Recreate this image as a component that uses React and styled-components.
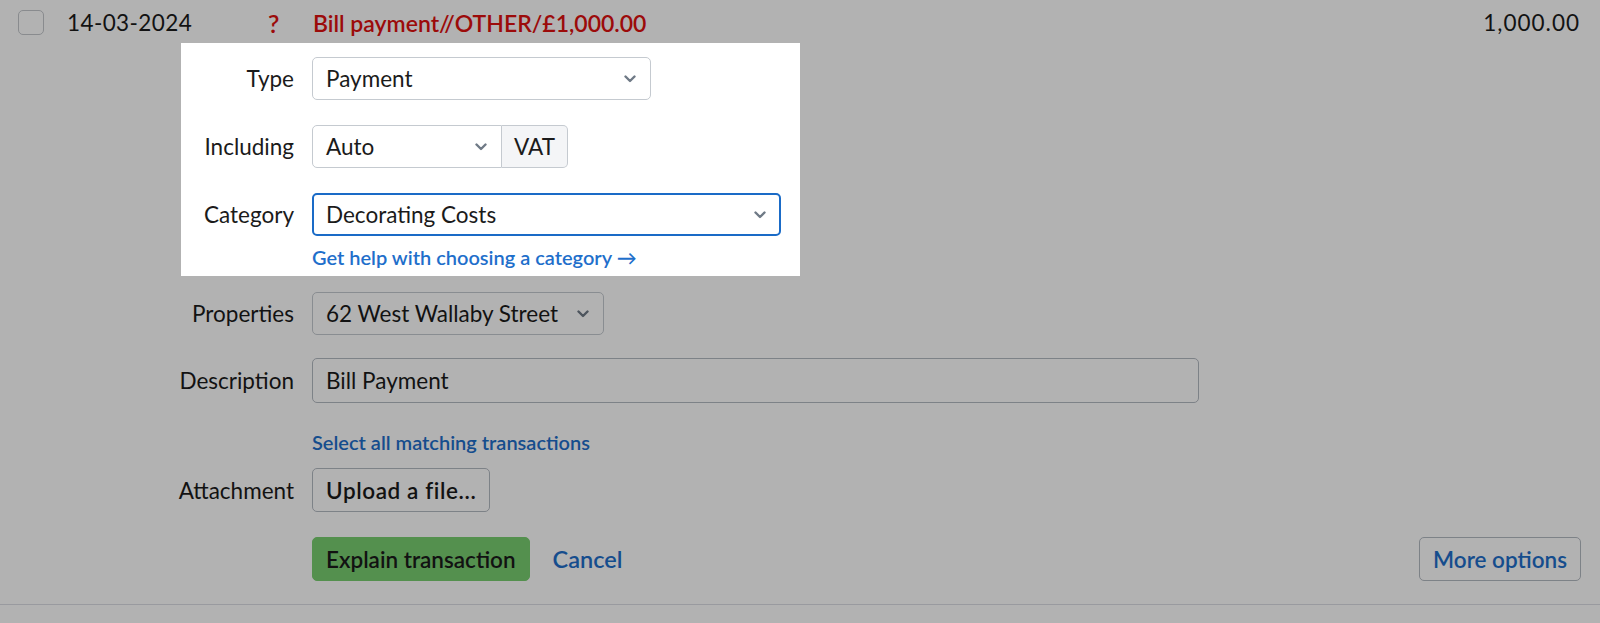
import React from "react";
import styled, { createGlobalStyle } from "styled-components";

const GlobalStyle = createGlobalStyle`
  html, body { margin: 0; padding: 0; background: #ffffff; }
  body {
    font-family: "Lato", "Open Sans", sans-serif;
    font-size: 22.5px;
    color: #1b1b1b;
    overflow: hidden;
  }
`;

const Page = styled.div`
  width: 1600px;
  height: 623px;
  position: relative;
  overflow: hidden;
`;

const TopRow = styled.div`
  display: flex;
  align-items: center;
  height: 45px;
  padding: 0 20px 0 18px;
`;

const Checkbox = styled.span`
  display: inline-block;
  width: 24px;
  height: 23px;
  border: 1px solid #c4c7cc;
  border-radius: 5px;
  background: #fff;
  flex: none;
`;

const DateText = styled.span`
  margin-left: 23px;
  width: 200px;
  flex: none;
  letter-spacing: 0.4px;
`;

const Flag = styled.span`
  width: 45px;
  flex: none;
  color: #e0100f;
  font-size: 25px;
  font-weight: 600;
  padding-left: 1px;
`;

const TxDesc = styled.span`
  color: #e0100f;
  font-weight: 600;
  font-size: 23px;
`;

const Amount = styled.span`
  margin-left: auto;
  letter-spacing: 1px;
`;

const Form = styled.div`
  padding-top: 12px;
`;

const Spotlight = styled.div`
  position: relative;
  &::before {
    content: "";
    position: absolute;
    left: 181px;
    width: 619px;
    top: -14px;
    bottom: -9px;
    box-shadow: 0 0 0 3000px rgba(0, 0, 0, 0.3);
    pointer-events: none;
    z-index: 10;
  }
`;

const FieldRow = styled.div`
  display: flex;
  align-items: center;
  gap: 18px;
  margin-top: ${(p) => p.$mt || 0}px;
  padding-right: 19px;
`;

const Label = styled.div`
  width: 294px;
  flex: none;
  text-align: right;
`;

const SelectBox = styled.div`
  box-sizing: border-box;
  display: flex;
  align-items: center;
  justify-content: space-between;
  width: ${(p) => p.$w}px;
  height: 43px;
  padding: 0 ${(p) => (p.$focus ? 13 : 14)}px 0 ${(p) => (p.$focus ? 12 : 13)}px;
  border: ${(p) => (p.$focus ? "2px solid #1a6bc7" : "1px solid #c5cad0")};
  border-radius: ${(p) => (p.$joined ? "5px 0 0 5px" : "5px")};
  background: #fff;
  flex: none;
  white-space: nowrap;
`;

const Chevron = () => (
  <svg width="12" height="8" viewBox="0 0 12 8" aria-hidden="true">
    <path d="M1.5 1.5 L6 6 L10.5 1.5" fill="none" stroke="#6f7a86" strokeWidth="2.4" strokeLinecap="round" strokeLinejoin="round" />
  </svg>
);

const Group = styled.div`
  display: flex;
  flex: none;
`;

const Addon = styled.div`
  box-sizing: border-box;
  height: 43px;
  width: 66px;
  display: flex;
  align-items: center;
  justify-content: center;
  background: #f4f5f7;
  border: 1px solid #c5cad0;
  border-left: none;
  border-radius: 0 5px 5px 0;
`;

const TextInput = styled.div`
  box-sizing: border-box;
  width: 887px;
  height: 45px;
  display: flex;
  align-items: center;
  padding: 0 13px;
  border: 1px solid #b4bac2;
  border-radius: 5px;
  background: #fff;
`;

const HintLink = styled.div`
  padding-left: 312px;
  margin-top: ${(p) => p.$mt || 0}px;
  line-height: 20px;
  font-size: 20px;
  font-weight: 600;
  color: #1f6fcb;
`;

const Button = styled.div`
  box-sizing: border-box;
  height: 44px;
  padding: 0 13px;
  display: inline-flex;
  align-items: center;
  border-radius: 5px;
  font-weight: 600;
  flex: none;
  white-space: nowrap;
  letter-spacing: ${(p) => p.$track || 0}px;
  border: 1px solid ${(p) => (p.$primary ? "#79cf70" : "#b4bac2")};
  background: ${(p) => (p.$primary ? "#79cf70" : "#fff")};
  color: ${(p) => (p.$link ? "#1f6fcb" : "#1b1b1b")};
`;

const TextLink = styled.span`
  margin-left: 5px;
  color: #1f6fcb;
  font-weight: 600;
  font-size: 23.5px;
`;

const Push = styled.div`
  margin-left: auto;
`;

const Divider = styled.div`
  margin-top: 23px;
  border-top: 1px solid #dcdde4;
`;

export default function App() {
  return (
    <Page>
      <GlobalStyle />
      <TopRow>
        <Checkbox />
        <DateText>14-03-2024</DateText>
        <Flag>?</Flag>
        <TxDesc>Bill payment//OTHER/£1,000.00</TxDesc>
        <Amount>1,000.00</Amount>
      </TopRow>
      <Form>
        <Spotlight>
          <FieldRow>
            <Label>Type</Label>
            <SelectBox $w={339}>
              <span>Payment</span>
              <Chevron />
            </SelectBox>
          </FieldRow>
          <FieldRow $mt={25}>
            <Label>Including</Label>
            <Group>
              <SelectBox $w={190} $joined>
                <span>Auto</span>
                <Chevron />
              </SelectBox>
              <Addon>VAT</Addon>
            </Group>
          </FieldRow>
          <FieldRow $mt={25}>
            <Label>Category</Label>
            <SelectBox $w={469} $focus>
              <span>Decorating Costs</span>
              <Chevron />
            </SelectBox>
          </FieldRow>
          <HintLink $mt={11}>Get help with choosing a category →</HintLink>
        </Spotlight>
        <FieldRow $mt={25}>
          <Label>Properties</Label>
          <SelectBox $w={292}>
            <span>62 West Wallaby Street</span>
            <Chevron />
          </SelectBox>
        </FieldRow>
        <FieldRow $mt={23}>
          <Label>Description</Label>
          <TextInput>Bill Payment</TextInput>
        </FieldRow>
        <HintLink $mt={29}>Select all matching transactions</HintLink>
        <FieldRow $mt={16}>
          <Label>Attachment</Label>
          <Button $track={0.6}>Upload a file...</Button>
        </FieldRow>
        <FieldRow $mt={25}>
          <Label />
          <Button $primary>Explain transaction</Button>
          <TextLink>Cancel</TextLink>
          <Push>
            <Button $link>More options</Button>
          </Push>
        </FieldRow>
        <Divider />
      </Form>
    </Page>
  );
}
